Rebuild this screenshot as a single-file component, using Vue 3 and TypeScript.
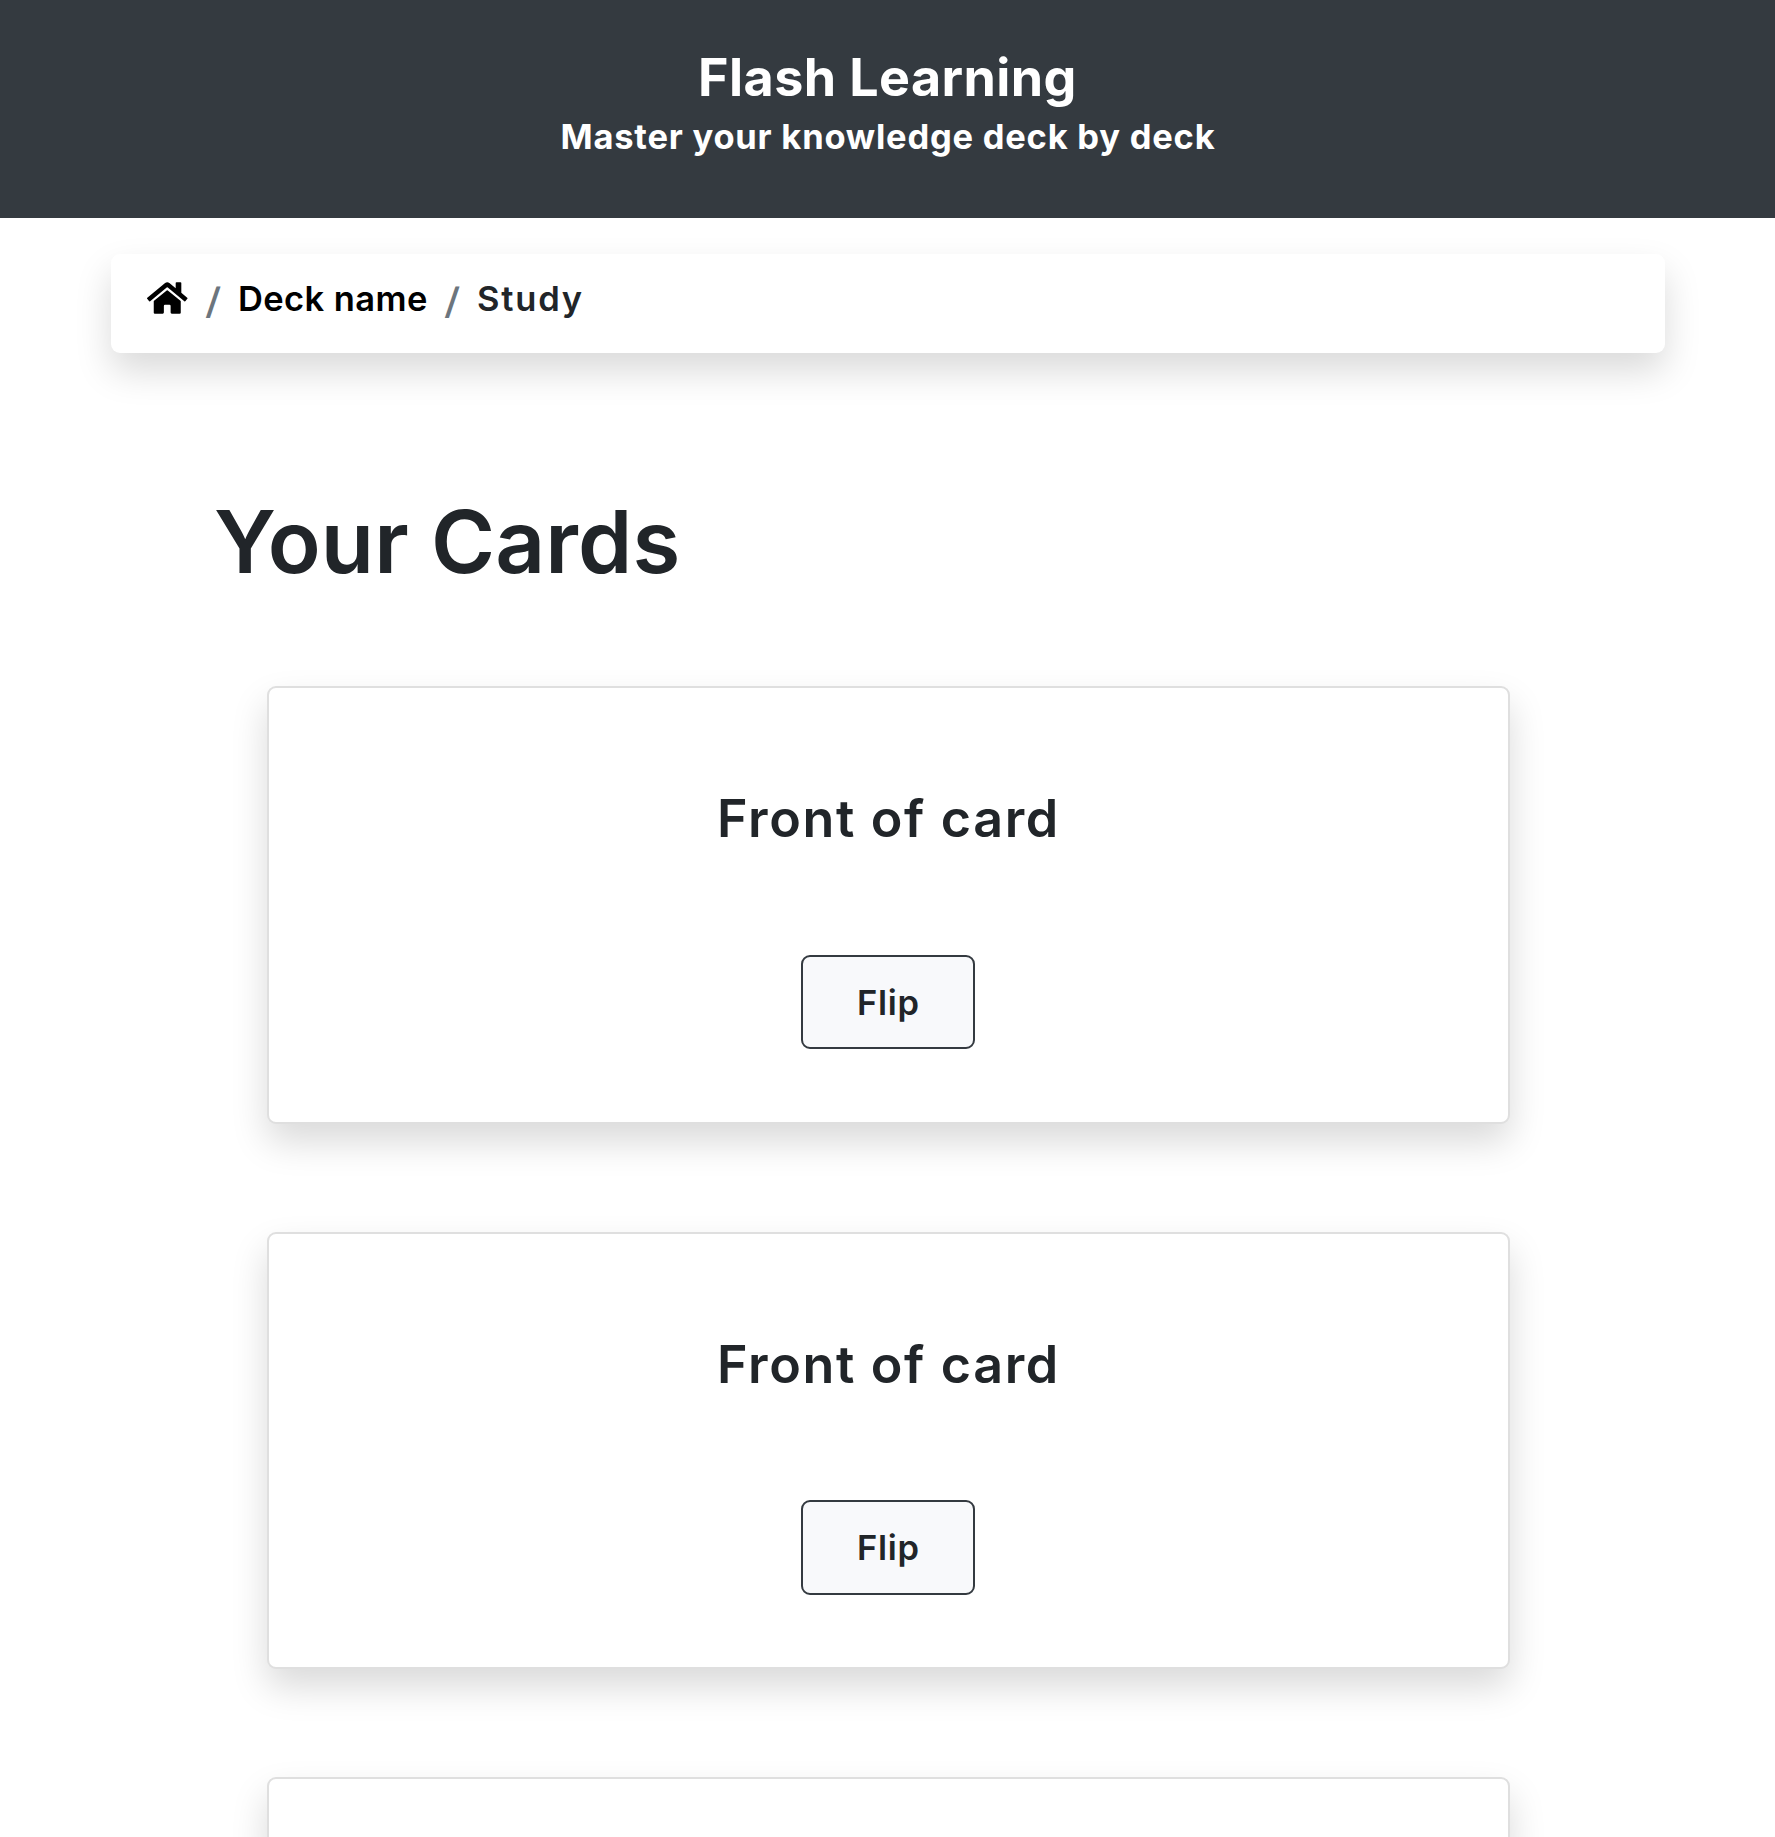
<script setup lang="ts">
interface Card {
  id: number
  front?: string
}

// A card without a front renders as an empty frame.
const cards: Card[] = [
  { id: 1, front: 'Front of card' },
  { id: 2, front: 'Front of card' },
  { id: 3 },
]
</script>

<template>
  <div class="page">
    <header class="header">
      <div class="title">Flash Learning</div>
      <div class="subtitle">Master your knowledge deck by deck</div>
    </header>

    <nav class="breadcrumb">
      <svg class="home" viewBox="0 0 576 512" aria-label="Home">
        <path
          d="M280.37 148.26L96 300.11V464a16 16 0 0 0 16 16l112.06-.29a16 16 0 0 0 15.92-16V368a16 16 0 0 1 16-16h64a16 16 0 0 1 16 16v95.64a16 16 0 0 0 16 16.05L464 480a16 16 0 0 0 16-16V300L295.67 148.26a12.19 12.19 0 0 0-15.3 0zM571.6 251.47L488 182.56V44.05a12 12 0 0 0-12-12h-56a12 12 0 0 0-12 12v72.61L318.47 43a48 48 0 0 0-61 0L4.34 251.47a12 12 0 0 0-1.6 16.9l25.5 31A12 12 0 0 0 45.15 301l235.22-193.74a12.19 12.19 0 0 1 15.3 0L530.9 301a12 12 0 0 0 16.9-1.6l25.5-31a12 12 0 0 0-1.7-16.93z"
        />
      </svg>
      <span class="slash">/</span>
      <a class="deck">Deck name</a>
      <span class="slash">/</span>
      <span class="current">Study</span>
    </nav>

    <main>
      <h1>Your Cards</h1>
      <div class="cards">
        <section v-for="card in cards" :key="card.id" class="card">
          <template v-if="card.front">
            <h2>{{ card.front }}</h2>
            <button type="button" class="flip">Flip</button>
          </template>
        </section>
      </div>
    </main>
  </div>
</template>

<style>
body {
  margin: 0;
  background: #fff;
}
</style>

<style scoped>
.page {
  box-sizing: border-box;
  height: 1837px;
  overflow: hidden;
  font-family: Inter, 'Liberation Sans', sans-serif;
  color: #212529;
}
.header {
  box-sizing: border-box;
  height: 218px;
  padding-top: 48px;
  background: #343a40;
  color: #fff;
  text-align: center;
  font-weight: 700;
  white-space: nowrap;
}
.title {
  font-size: 52px;
  line-height: 60px;
  letter-spacing: 0.42px;
}
.subtitle {
  margin-top: 2px;
  padding-left: 1px;
  font-size: 34.5px;
  line-height: 54px;
  letter-spacing: 0.77px;
}
.breadcrumb {
  box-sizing: border-box;
  display: flex;
  align-items: flex-start;
  width: 1554px;
  height: 99px;
  margin: 36px 0 0 111px;
  padding: 17.5px 36px 0;
  border-radius: 9px;
  background: #fff;
  box-shadow: 0 18px 36px rgba(0, 0, 0, 0.15);
  font-size: 34.5px;
  font-weight: 600;
  line-height: 54px;
  white-space: nowrap;
}
.home {
  width: 40.5px;
  height: 36px;
  margin-top: 8px;
}
.slash {
  width: 50.5px;
  margin-top: 2px;
  text-align: center;
  color: #6c757d;
  font-size: 36px;
  transform: skewX(-4deg);
}
.deck {
  width: 188.5px;
  color: #000;
  letter-spacing: 0.4px;
}
.current {
  letter-spacing: 1.8px;
}
h1 {
  margin: 135px 0 0 214px;
  font-size: 87px;
  font-weight: 600;
  line-height: 108px;
  letter-spacing: 0.15px;
}
.cards {
  display: flex;
  flex-direction: column;
  gap: 108px;
  width: 1243px;
  margin: 90.4px 0 0 267px;
}
.card {
  box-sizing: border-box;
  flex: none;
  display: flex;
  flex-direction: column;
  align-items: center;
  height: 437.5px;
  padding-top: 99px;
  border: 2px solid #dfdfdf;
  border-radius: 9px;
  background: #fff;
  box-shadow: 0 18px 36px rgba(0, 0, 0, 0.15);
}
h2 {
  margin: 0;
  font-size: 52px;
  font-weight: 600;
  line-height: 64px;
  letter-spacing: 1.65px;
}
.flip {
  box-sizing: border-box;
  width: 174px;
  height: 94.5px;
  margin: 103.6px 1.2px 0 0;
  padding: 0 0 0 1px;
  border: 2px solid #343a40;
  border-radius: 9px;
  background: #f8f9fb;
  color: #212529;
  font-family: inherit;
  font-size: 34.5px;
  font-weight: 600;
  letter-spacing: 0.7px;
}
</style>
